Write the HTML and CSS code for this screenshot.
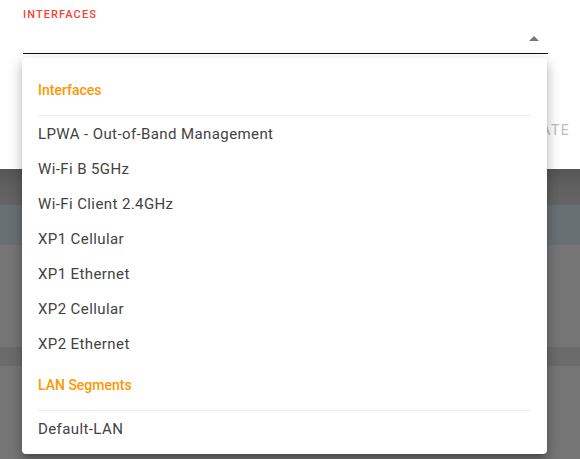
FILE: index.html
```html
<!DOCTYPE html>
<html>
<head>
<meta charset="utf-8">
<link rel="stylesheet" href="styles.css">
</head>
<body>
<div class="page">
  <section class="dialog">
    <div class="field">
      <label class="field-label">Interfaces</label>
      <div class="field-input">
        <span class="arrow"></span>
      </div>
    </div>
    <div class="actions">
      <button class="btn">Update</button>
    </div>
  </section>
  <section class="backdrop">
    <div class="band band-1"></div>
    <div class="band band-2"></div>
    <div class="band band-3"></div>
    <div class="band band-4"></div>
    <div class="band band-5"></div>
  </section>

  <div class="menu">
    <div class="group-header">Interfaces</div>
    <div class="item">LPWA - Out-of-Band Management</div>
    <div class="item">Wi-Fi B 5GHz</div>
    <div class="item">Wi-Fi Client 2.4GHz</div>
    <div class="item">XP1 Cellular</div>
    <div class="item">XP1 Ethernet</div>
    <div class="item">XP2 Cellular</div>
    <div class="item">XP2 Ethernet</div>
    <div class="group-header">LAN Segments</div>
    <div class="item">Default-LAN</div>
  </div>
</div>
</body>
</html>
```

FILE: styles.css
```css
* { box-sizing: border-box; }
html, body {
  margin: 0;
  padding: 0;
}
body {
  width: 580px;
  height: 459px;
  overflow: hidden;
  font-family: Roboto, "Liberation Sans", sans-serif;
  background: #747474;
}
.page {
  position: relative;
  width: 580px;
  height: 459px;
  display: flex;
  flex-direction: column;
}
.dialog {
  height: 169px;
  background: #fff;
  display: flex;
  flex-direction: column;
  padding: 8px 0 0 23px;
}
.field {
  width: 525px;
  display: flex;
  flex-direction: column;
}
.field-label {
  font-size: 11px;
  line-height: 13px;
  letter-spacing: 1.1px;
  text-transform: uppercase;
  color: #f44336;
  font-weight: 500;
}
.field-input {
  height: 33px;
  border-bottom: 1px solid #1d0f0f;
  display: flex;
  justify-content: flex-end;
  align-items: center;
  padding-right: 9px;
  padding-top: 2px;
}
.arrow {
  width: 0;
  height: 0;
  border-left: 5px solid transparent;
  border-right: 5px solid transparent;
  border-bottom: 5px solid #767676;
}
.actions {
  display: flex;
  justify-content: flex-end;
  padding-right: 10px;
  margin-top: 68px;
}
.btn {
  border: none;
  background: none;
  font-family: Roboto, "Liberation Sans", sans-serif;
  font-size: 14px;
  letter-spacing: 1.4px;
  text-transform: uppercase;
  color: #bdbdbd;
  padding: 0;
  line-height: 16px;
}
.backdrop {
  flex: 1;
  display: flex;
  flex-direction: column;
}
.band-1 {
  height: 36px;
  background: linear-gradient(#545454, #5f5f5f 40%, #646464);
}
.band-2 {
  height: 40px;
  background: #697074;
}
.band-3 {
  height: 102px;
  background: #757575;
}
.band-4 {
  height: 19px;
  background: #6b6b6b;
}
.band-5 {
  flex: 1;
  background: #757575;
}
.menu {
  position: absolute;
  left: 22px;
  top: 58px;
  width: 525px;
  background: #fff;
  border-radius: 4px;
  padding: 8px 0;
  box-shadow: 0 5px 5px -3px rgba(0,0,0,.2), 0 8px 10px 1px rgba(0,0,0,.14), 0 3px 14px 2px rgba(0,0,0,.12);
}
.group-header {
  height: 50px;
  margin: 0 16px;
  display: flex;
  align-items: center;
  border-bottom: 1px solid #eeeeee;
  color: #ff9800;
  font-size: 14px;
  font-weight: 500;
  padding-bottom: 1px;
}
.item {
  height: 35px;
  display: flex;
  align-items: center;
  padding: 0 16px;
  font-size: 15px;
  letter-spacing: 0.4px;
  color: #424242;
}
```
